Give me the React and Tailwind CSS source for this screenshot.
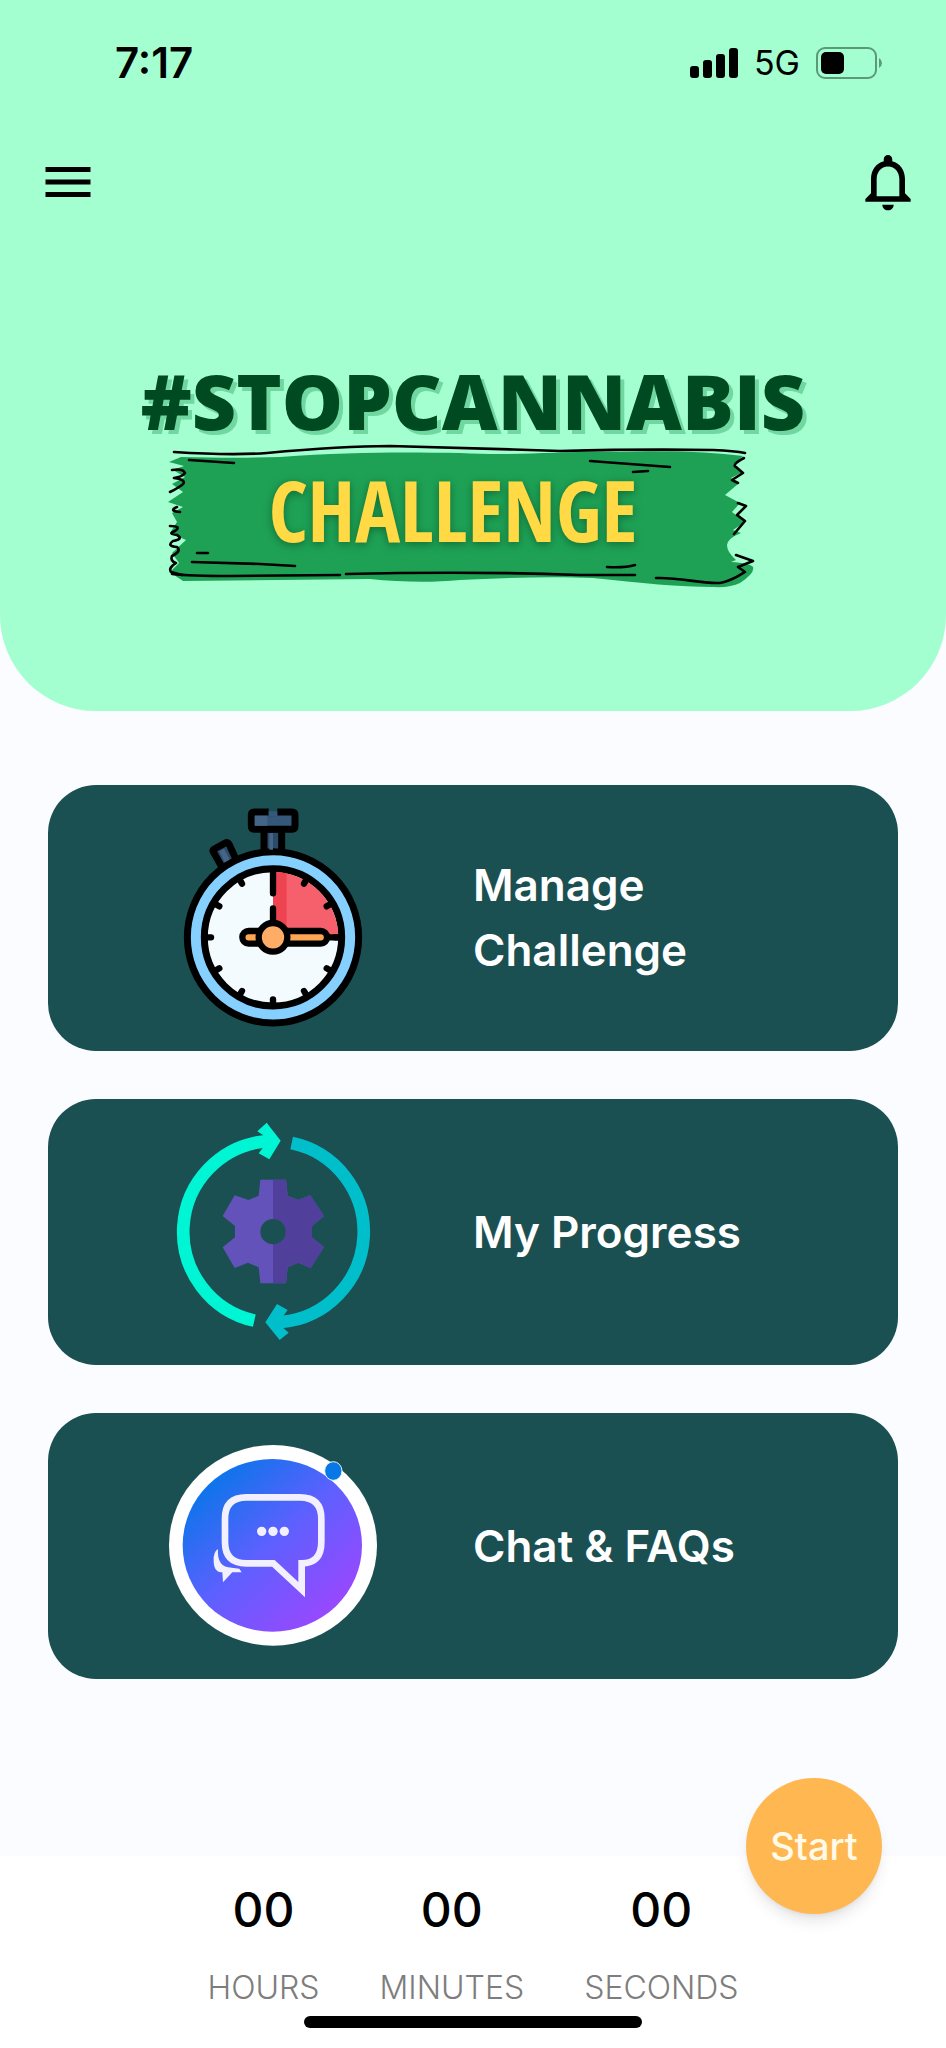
import React from "react";
import { MdMenu, MdNotificationsNone } from "react-icons/md";

const StatusBar = () => (
  <div className="flex h-[126px] items-center justify-between pl-[115px] pr-16">
    <span className="text-[42px] font-semibold leading-none">7:17</span>
    <div className="flex items-center gap-4">
      <svg className="h-[30px] w-12" viewBox="0 0 48 30" aria-hidden="true">
        <rect x="0" y="18" width="9" height="12" rx="3" />
        <rect x="13" y="12" width="9" height="18" rx="3" />
        <rect x="26" y="6" width="9" height="24" rx="3" />
        <rect x="39" y="0" width="9" height="30" rx="3" />
      </svg>
      <span className="text-[34px] leading-none">5G</span>
      <svg className="h-8 w-[66px]" viewBox="0 0 66 32" aria-hidden="true">
        <rect x="1" y="1" width="59" height="30" rx="8" fill="none" stroke="#5a9a78" strokeWidth="2" />
        <rect x="5" y="5" width="23" height="22" rx="5" />
        <path d="M63 11q3 2 3 5t-3 5z" fill="#5a9a78" />
      </svg>
    </div>
  </div>
);

const Logo = () => (
  <div className="flex flex-col items-center">
    <h1 className="font-['Open_Sans'] text-[77px] font-extrabold leading-[80px] text-[#004a21] [text-shadow:4px_4px_0_#6fd79f]">
      #STOPCANNABIS
    </h1>
    <div className="relative flex h-[150px] w-[600px] items-center justify-center pb-3">
      <svg className="absolute inset-0 h-full w-full" viewBox="173 441 600 150" aria-hidden="true" overflow="visible">
        <path
          fill="#1ea155"
          d="M169 462L181 457C220 458 250 458 280 457C350 452 400 452 460 453C520 456 560 451 620 452C670 450 710 452 743 456L733 465L743 472L731 478L738 484L725 495L740 503L732 512L745 522L733 530L741 533Q728 538 727 545Q727 552 736 560L731 562Q750 563 753 567Q755 573 740 583Q730 588 713 587C680 587 640 583 593 578C550 576 500 578 460 580C430 583 400 582 370 579L183 581L177 577L170 572L179 563L172 553L186 540L170 533L177 522L172 513L183 507L168 502L183 492L172 484L185 477L173 470L184 466Z"
        />
        <g fill="none" stroke="#000" strokeWidth="2.6" strokeLinecap="round" strokeLinejoin="round">
          <path d="M174 452C205 454 240 455 267 453C310 449 350 446 390 446C430 447 500 449 560 451C600 450 650 449 713 450Q735 451 745 453" />
          <path d="M189 460L234 463M590 461L670 467M633 472L648 471M197 553L208 553M192 562L260 564L295 566M607 567Q625 568 635 565" />
          <path d="M172 574Q190 576 230 576L340 575M346 574C430 572 500 572 580 575L635 575M656 578C680 577 700 584 720 583C732 581 740 575 745 572L738 567L753 561L736 555" />
          <path d="M172 470Q183 468 185 473Q182 477 174 478Q188 480 182 485Q178 488 170 492M177 507Q168 511 180 512M170 526Q182 526 175 531Q167 534 177 535Q184 539 173 541Q166 546 177 547Q182 551 172 556Q170 561 176 563Q168 568 171 572L182 575" />
          <path d="M744 458Q731 465 736 467L743 473L732 480L738 483M738 503L746 506L737 515L745 521L734 534" />
        </g>
      </svg>
      <span className="relative mr-10 font-['Liberation_Sans_Narrow','Open_Sans_Condensed','Noto_Sans','sans-serif'] text-[84px] font-bold leading-none text-[#ffda45] [text-shadow:0_2px_8px_#126b35]">
        CHALLENGE
      </span>
    </div>
  </div>
);

const TICKS = [30, 60, 90, 120, 150, 180, 210, 240, 270, 300, 330];

const StopwatchIcon = () => (
  <svg className="h-[250px] w-[230px]" viewBox="-6 7 690 750" aria-hidden="true">
    <g stroke="#000" strokeWidth="21" strokeLinejoin="round" strokeLinecap="round">
      <path d="M159 182Q158 178 163 175L198 156Q204 155 208 162L232 215L192 240Z" fill="#2c4a69" />
      <path d="M178 182l14-8 20 36-16 10z" fill="#456587" stroke="none" />
      <path d="M312 115h53v75h-53z" fill="#2c4a69" />
      <path d="M283 64h113q9 0 9 9v34q0 9-9 9H283q-9 0-9-9V73q0-9 9-9z" fill="#35577a" />
      <circle cx="339" cy="440" r="257" fill="#86d0ff" />
      <circle cx="339" cy="440" r="206" fill="#f3fbff" />
    </g>
    <path d="M326 52h26v26h-26z" fill="#1b5052" />
    <path d="M326 62h26v16h-26z" fill="#35577a" />
    <path d="M284 75h38v30h-38zM328 127h11v50h-11z" fill="#456587" />
    <path d="M339 244A196 196 0 0 1 535 440H339z" fill="#f6606d" />
    <path d="M339 244a196 196 0 0 1 41 4v192h-41z" fill="#ee4452" />
    <g stroke="#000" strokeWidth="19" strokeLinecap="round">
      {TICKS.map((deg) => (
        <path key={deg} d="M339 240v14" transform={`rotate(${deg} 339 440)`} />
      ))}
      <path d="M339 240v68M339 353v45M500 440h40" />
      <rect x="247" y="421" width="254" height="38" rx="19" fill="#ffa653" />
      <circle cx="339" cy="440" r="43" fill="#ffad66" />
    </g>
  </svg>
);

const ProgressIcon = () => (
  <svg className="h-60 w-60" viewBox="9 36 720 720" aria-hidden="true">
    <g fill="none" strokeWidth="38">
      <path d="M313 662A273 273 0 0 1 345 124" stroke="#00f5d4" />
      <path d="M425 129A272 272 0 0 1 395 666" stroke="#00bfcb" />
    </g>
    <path d="M350 68L392 122L358 178L326 160L340 142V106L322 94Z" fill="#00f5d4" />
    <path d="M381 612L413 630L400 648V684L416 698L389 720L346 667Z" fill="#00bfcb" />
    <path d="M331 239h77l5 48 32 13 36-14 41 62-36 30v34l36 30-40 62-37-16-32 14-5 48h-77l-5-48-32-14-40 16-36-62 37-30v-34l-37-30 36-62 42 14 30-13z" fill="#6352b9" />
    <path d="M369 239h39l5 48 32 13 36-14 41 62-36 30v34l36 30-40 62-37-16-32 14-5 48h-39z" fill="#50409b" />
    <circle cx="369" cy="395" r="38" fill="#1b5052" />
  </svg>
);

const ChatIcon = () => (
  <svg className="h-60 w-60" viewBox="9 21 720 720" aria-hidden="true">
    <defs>
      <linearGradient id="chatFill" x1="0.1" y1="0.1" x2="0.85" y2="0.9">
        <stop offset="0" stopColor="#0477e8" />
        <stop offset="0.5" stopColor="#5d60ff" />
        <stop offset="1" stopColor="#9b47ff" />
      </linearGradient>
    </defs>
    <ellipse cx="369" cy="379" rx="312" ry="301" fill="#fff" />
    <ellipse cx="367" cy="379" rx="269" ry="259" fill="url(#chatFill)" />
    <path
      d="M289 235H450Q514 235 514 299V369Q514 433 455 433V512L370 433H289Q225 433 225 369V299Q225 235 289 235Z"
      fill="none"
      stroke="#f2f0ff"
      strokeWidth="20"
    />
    <path d="M204 390Q200 446 245 446L268 449L275 460H247L219 490L217 460Q191 460 191 425Q190 398 204 390Z" fill="#f2f0ff" />
    <g fill="#f2f0ff">
      <circle cx="335" cy="337" r="14" />
      <circle cx="369" cy="337" r="14" />
      <circle cx="403" cy="337" r="14" />
    </g>
    <ellipse cx="550" cy="156" rx="26" ry="28" fill="#0878e6" stroke="#e8f6ff" strokeWidth="3" />
  </svg>
);

const menuItems = [
  { title: "Manage Challenge", icon: StopwatchIcon },
  { title: "My Progress", icon: ProgressIcon },
  { title: "Chat & FAQs", icon: ChatIcon },
];

const MenuCard = ({ title, icon: Icon }) => (
  <button
    type="button"
    className="grid min-h-[266px] w-full grid-cols-2 items-center rounded-[48px] bg-[#1b5052] px-6 text-left"
  >
    <span className="flex justify-center">
      <Icon />
    </span>
    <span className="max-w-72 text-[44px] font-semibold leading-[65px] text-white">{title}</span>
  </button>
);

const timer = [
  { label: "HOURS", value: "00" },
  { label: "MINUTES", value: "00" },
  { label: "SECONDS", value: "00" },
];

export default function App() {
  return (
    <div className="flex min-h-screen flex-col bg-[#fbfcff] font-['Inter','sans-serif'] text-black">
      <header className="rounded-b-[96px] bg-[#a3ffcf] pb-[120px]">
        <StatusBar />
        <nav className="flex h-28 items-center justify-between pl-[38px] pr-6">
          <button type="button" aria-label="Menu">
            <MdMenu size={60} />
          </button>
          <button type="button" aria-label="Notifications">
            <MdNotificationsNone size={68} />
          </button>
        </nav>
        <div className="pt-[123px]">
          <Logo />
        </div>
      </header>

      <main className="flex flex-1 flex-col gap-12 px-12 pb-16 pt-[74px]">
        {menuItems.map((item) => (
          <MenuCard key={item.title} title={item.title} icon={item.icon} />
        ))}
      </main>

      <footer className="relative bg-white pb-5 pt-6">
        <div className="flex justify-center gap-[60px]">
          {timer.map((item) => (
            <div key={item.label} className="flex flex-col items-center">
              <span className="text-[48px] font-medium leading-[60px]">{item.value}</span>
              <span className="mt-7 text-[32px] font-light leading-[40px] text-[#7d7d7d]">{item.label}</span>
            </div>
          ))}
        </div>
        <div className="mx-auto mt-2 h-3 w-[338px] rounded-full bg-black" />
        <button
          type="button"
          className="absolute -top-[78px] right-16 size-[136px] rounded-full bg-[#ffb752] text-[38px] font-medium text-[#fffbe8] shadow-lg"
        >
          Start
        </button>
      </footer>
    </div>
  );
}
